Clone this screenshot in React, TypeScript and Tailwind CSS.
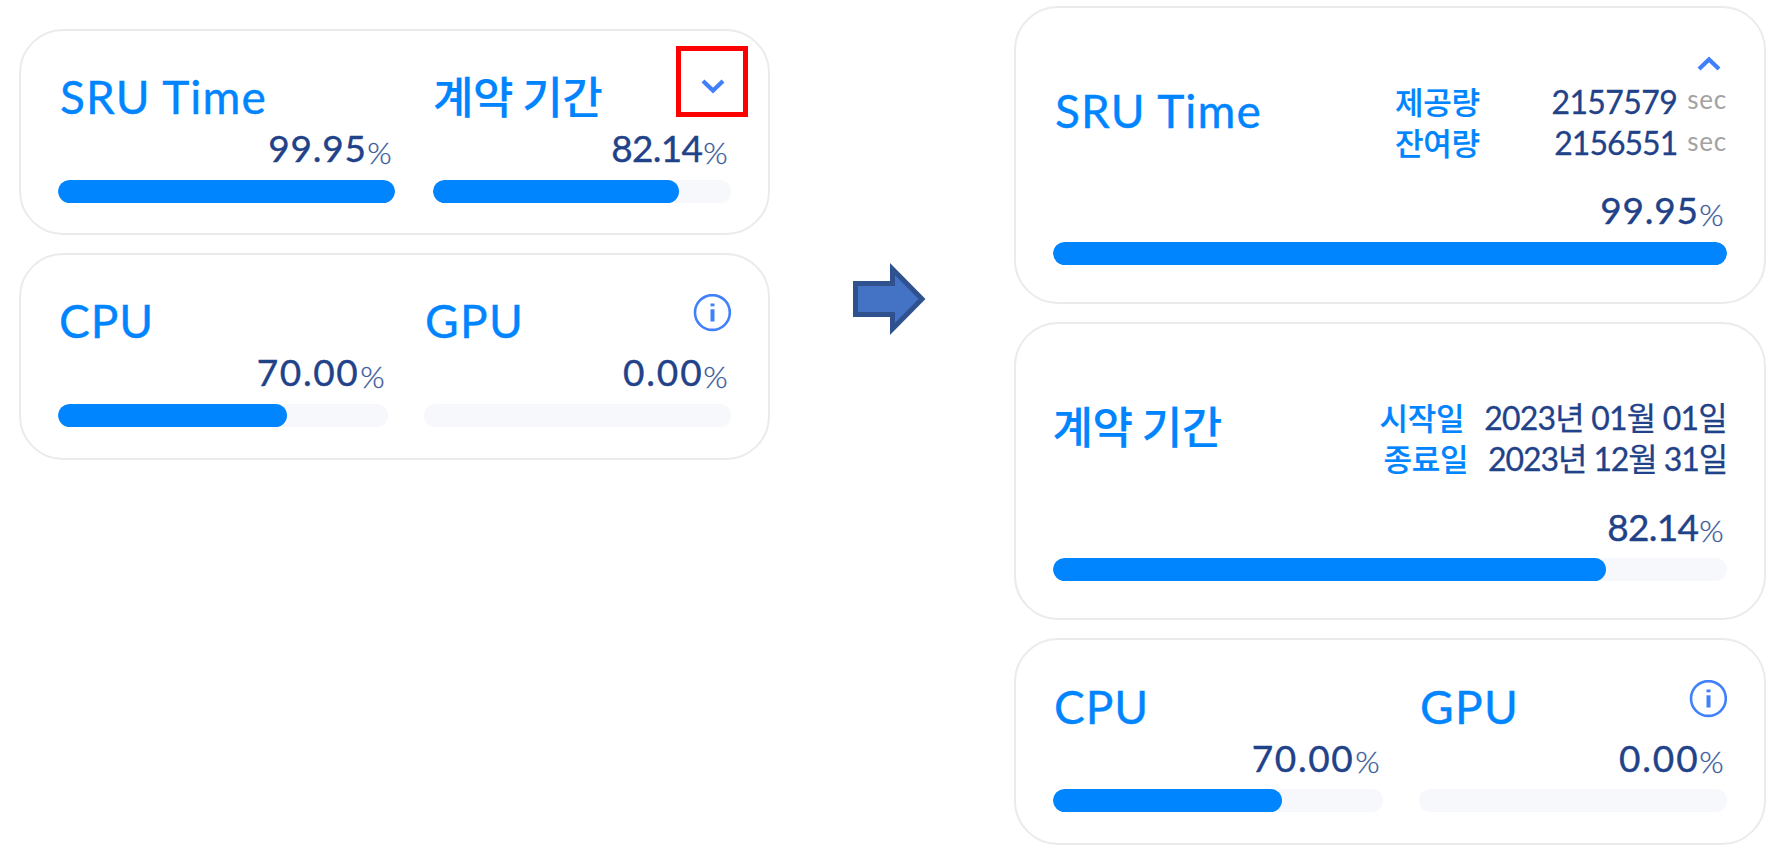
import type { ReactNode } from "react";
import clsx from "clsx";

const latin = "font-['Lato','Noto_Sans_CJK_KR',sans-serif]";
const hangul = "font-['Noto_Sans_CJK_KR',sans-serif]";

function Card({ className, children }: { className: string; children: ReactNode }) {
  return (
    <section className={clsx("relative rounded-[44px] border-2 border-[#ebebeb] bg-white pl-[36.5px] pr-[37px]", className)}>
      {children}
    </section>
  );
}

function Title({ children, className }: { children: ReactNode; className?: string }) {
  return (
    <h2 className={clsx("relative top-px whitespace-nowrap text-[46px] leading-none text-[#0085ff] [-webkit-text-stroke:0.4px_#0085ff]", className)}>
      {children}
    </h2>
  );
}

function ContractTitle() {
  return (
    <h2 className={clsx(hangul, "relative -top-px whitespace-nowrap text-[44px] font-medium leading-[46px] tracking-[-0.5px] text-[#0085ff] [-webkit-text-stroke:0.2px_#0085ff]")}>
      계약 기간
    </h2>
  );
}

type MeterProps = { value: string; fill: number; spacing: string; className?: string };

function Meter({ value, fill, spacing, className }: MeterProps) {
  return (
    <div className={className}>
      <div className="mb-[13.5px] flex h-[37px] items-baseline justify-end pr-[2.5px] leading-none text-[#1f4289]">
        <span className={clsx("text-[37px] leading-none [-webkit-text-stroke:0.4px_#1f4289]", spacing)}>{value}</span>
        <span className="relative top-[1.5px] ml-px text-[29px] font-light leading-none tracking-[0.5px] text-[#3c5c9b] [-webkit-text-stroke:0.3px_#3c5c9b]">
          <span className="inline-block origin-right scale-x-[1.08]">%</span>
        </span>
      </div>
      <div className="h-[23px] overflow-hidden rounded-full bg-[#f6f8fc]">
        <div className="h-full rounded-full bg-[#0085ff]" style={{ width: `${fill}%` }} />
      </div>
    </div>
  );
}

function Chevron({ up }: { up?: boolean }) {
  return (
    <svg width="24" height="15" viewBox="0 0 24 15" fill="none" stroke="#4180fb" strokeWidth="4.2">
      <path d={up ? "M2 13 12 3.4l10 9.6" : "M2 2 12 11.6 22 2"} />
    </svg>
  );
}

function InfoIcon() {
  return (
    <svg width="38" height="38" viewBox="0 0 38 38" fill="none">
      <circle cx="19.4" cy="18.5" r="17.4" stroke="#4180fb" strokeWidth="2.6" />
      <rect x="17.5" y="9.5" width="4" height="2.8" fill="#4180fb" />
      <rect x="17.5" y="15.3" width="4" height="12.2" fill="#4180fb" />
    </svg>
  );
}

function UsageCard() {
  return (
    <Card className="flex h-[207px] pt-[42.5px]">
      <div className="w-[330px]">
        <Title className="pl-[1.5px] tracking-[1px]">CPU</Title>
        <Meter value="70.00" fill={69.6} spacing="mr-[1.5px] tracking-[1.6px]" className="mt-[10px]" />
      </div>
      <div className="ml-[36.5px] flex-1">
        <div className="flex h-[46px] justify-between">
          <Title className="pl-px tracking-[1.4px]">GPU</Title>
          <div className="-mt-[3px]">
            <InfoIcon />
          </div>
        </div>
        <Meter value="0.00" fill={0} spacing="mr-px tracking-[1.8px]" className="mt-[10px]" />
      </div>
    </Card>
  );
}

function SummaryCard() {
  return (
    <Card className="flex h-[206.5px] pt-[42.5px]">
      <div className="w-[337px]">
        <Title className="pl-[2.5px] tracking-[1.1px]">SRU Time</Title>
        <Meter value="99.95" fill={100} spacing="mr-px tracking-[0.8px]" className="mt-[10px]" />
      </div>
      <div className="ml-[38.5px] flex-1">
        <div className="flex h-[46px] justify-between pr-[6.5px]">
          <ContractTitle />
          <div className="mt-[5.5px]">
            <Chevron />
          </div>
        </div>
        <Meter value="82.14" fill={82.4} spacing="mr-[2px] tracking-[-0.7px]" className="mt-[10px]" />
      </div>
      <div className="absolute left-[655px] top-[15px] h-[71px] w-[72px] border-[5px] border-[#ff0000]" />
    </Card>
  );
}

const labelClass =
  "font-['Noto_Sans_CJK_KR',sans-serif] text-[31px] font-medium leading-[41.5px] tracking-[-0.3px] text-[#0085ff] [-webkit-text-stroke:0.2px_#0085ff]";
const figureClass = "text-[32px] leading-[41.5px] text-[#1f4289] [-webkit-text-stroke:0.3px_#1f4289]";

function AmountRow({ label, value, spacing }: { label: string; value: string; spacing: string }) {
  return (
    <div className="flex h-[41.5px] items-baseline">
      <span className={clsx(labelClass, "flex-1 pl-px")}>{label}</span>
      <span className={clsx(figureClass, spacing)}>{value}</span>
      <span className="relative -top-[4.5px] ml-[10px] text-[26px] leading-none tracking-[0.8px] text-[#a3a3a3]">sec</span>
    </div>
  );
}

function DateRow({ label, value, className }: { label: string; value: string; className: string }) {
  return (
    <div className="flex h-[41.5px] items-baseline justify-end whitespace-nowrap">
      <span className={labelClass}>{label}</span>
      <span className={clsx(figureClass, "ml-[20px]", className)}>{value}</span>
    </div>
  );
}

export default function App() {
  return (
    <main className={clsx(latin, "flex h-[856px] w-[1778px] overflow-hidden bg-white")}>
      <div className="ml-[19px] flex w-[751px] flex-col gap-[17.5px] pt-[28.5px]">
        <SummaryCard />
        <UsageCard />
      </div>
      <div className="ml-[83px] pt-[262px]">
        <svg width="74" height="74" viewBox="0 0 74 74">
          <path d="M2.5 21.5H39.5V7L69 37 39.5 67V52.5H2.5Z" fill="#4472c4" stroke="#2f528f" strokeWidth="5" />
        </svg>
      </div>
      <div className="ml-[87px] flex w-[752px] flex-col gap-[18px] pt-[5.5px]">
        <Card className="h-[298.5px]">
          <div className="flex h-[183.5px] justify-between">
            <Title className="pl-[2.5px] pt-[79px] tracking-[1.1px]">SRU Time</Title>
            <div className="w-[333px] pt-[48px]">
              <div className="flex h-[24px] justify-end pr-[6.5px]">
                <Chevron up />
              </div>
              <AmountRow label="제공량" value="2157579" spacing="tracking-[-0.6px]" />
              <AmountRow label="잔여량" value="2156551" spacing="tracking-[-1px]" />
            </div>
          </div>
          <Meter value="99.95" fill={100} spacing="mr-[1.5px] tracking-[0.8px]" />
        </Card>
        <Card className="h-[298px]">
          <div className="flex h-[183.5px] justify-between">
            <div className="pt-[79px]">
              <ContractTitle />
            </div>
            <div className="pt-[71.5px]">
              <DateRow label="시작일" value="2023년 01월 01일" className="tracking-[-0.8px]" />
              <DateRow label="종료일" value="2023년 12월 31일" className="tracking-[-1.1px]" />
            </div>
          </div>
          <Meter value="82.14" fill={82.1} spacing="mr-[2px] tracking-[-0.7px]" />
        </Card>
        <UsageCard />
      </div>
    </main>
  );
}
